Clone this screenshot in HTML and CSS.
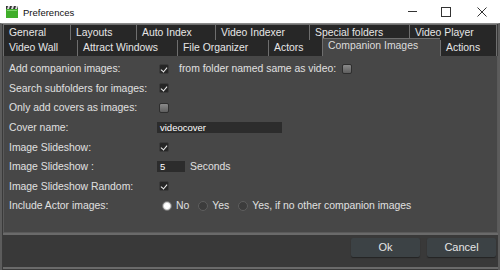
FILE: index.html
```html
<!DOCTYPE html>
<html lang="en">
<head>
  <meta charset="UTF-8">
  <title>Preferences</title>
  <link rel="stylesheet" href="styles.css">
</head>
<body>
  <div class="titlebar">
    <svg class="appicon" width="12" height="12" viewBox="0 0 12 12">
      <rect x="0" y="3" width="12" height="9" fill="#3fae2a"/>
      <rect x="0" y="0" width="12" height="3" fill="#333"/>
      <path d="M2 0 L4 0 L3 3 L1 3 Z M6 0 L8 0 L7 3 L5 3 Z M10 0 L12 0 L11 3 L9 3 Z" fill="#ddd"/>
      <rect x="1" y="4" width="10" height="1" fill="#7fd46a"/>
    </svg>
    <span class="wintitle">Preferences</span>
    <div class="winctl">
      <span class="ctl min"></span>
      <span class="ctl max"></span>
      <svg class="ctl close" width="10" height="10" viewBox="0 0 10 10"><path d="M0.5 0.5 L9.5 9.5 M9.5 0.5 L0.5 9.5" stroke="#333" stroke-width="1"/></svg>
    </div>
  </div>

  <div class="frame">
    <div class="tabrow row1">
      <div class="tab">General</div>
      <div class="tab">Layouts</div>
      <div class="tab">Auto Index</div>
      <div class="tab">Video Indexer</div>
      <div class="tab">Special folders</div>
      <div class="tab">Video Player</div>
    </div>
    <div class="tabrow row2">
      <div class="tab">Video Wall</div>
      <div class="tab">Attract Windows</div>
      <div class="tab">File Organizer</div>
      <div class="tab">Actors</div>
      <div class="tab active">Companion Images</div>
      <div class="tab">Actions</div>
    </div>

    <div class="panel">
      <div class="row">
        <span class="label">Add companion images:</span>
        <span class="check on"></span>
        <span class="text after">from folder named same as video:</span>
        <span class="check"></span>
      </div>
      <div class="row">
        <span class="label">Search subfolders for images:</span>
        <span class="check on"></span>
      </div>
      <div class="row">
        <span class="label">Only add covers as images:</span>
        <span class="check"></span>
      </div>
      <div class="row">
        <span class="label">Cover name:</span>
        <span class="field wide">videocover</span>
      </div>
      <div class="row">
        <span class="label">Image Slideshow:</span>
        <span class="check on"></span>
      </div>
      <div class="row">
        <span class="label">Image Slideshow :</span>
        <span class="field short">5</span>
        <span class="text unit">Seconds</span>
      </div>
      <div class="row">
        <span class="label">Image Slideshow Random:</span>
        <span class="check on"></span>
      </div>
      <div class="row">
        <span class="label">Include Actor images:</span>
        <span class="radio on"></span><span class="text opt">No</span>
        <span class="radio"></span><span class="text opt">Yes</span>
        <span class="radio"></span><span class="text opt">Yes, if no other companion images</span>
      </div>
    </div>

    <div class="buttonbar">
      <div class="btn">Ok</div>
      <div class="btn">Cancel</div>
    </div>
  </div>
</body>
</html>
```

FILE: styles.css
```css
body{
  margin: 0;
  width: 500px;
  height: 270px;
  background: #3a3a3a;
  font-family: "Liberation Sans", Arial, sans-serif;
  font-size: 10.4px;
  color: #e0e0e0;
  overflow: hidden;
}
.titlebar{
  height: 23px;
  background: #ffffff;
  display: flex;
  align-items: center;
  color: #111;
  font-size: 9.5px;
}
.appicon{
  margin-left: 6px;
  margin-right: 5px;
}
.wintitle{
  padding-top: 1px;
}
.winctl{
  margin-left: auto;
  display: flex;
  align-items: center;
}
.ctl{
  display: block;
}
.min{
  width: 9px;
  height: 1px;
  background: #333;
  margin-right: 24px;
}
.max{
  width: 8px;
  height: 8px;
  border: 1px solid #333;
  margin-right: 26px;
}
.close{
  margin-right: 13px;
}

.frame{
  height: 247px;
  border-top: 1px solid #8a8a8a;
  border-left: 2px solid #5c5c5c;
  border-right: 2px solid #5c5c5c;
  box-sizing: border-box;
  background: #3a3a3a;
  padding-left: 1px;
  display: flex;
  flex-direction: column;
}
.tabrow{
  display: grid;
  height: 16px;
  font-size: 10.4px;
}
.row1{
  grid-template-columns: 67px 66px 79px 94px 100px 88px;
}
.row2{
  grid-template-columns: 74px 100px 91px 54px 118px 57px;
}
.tab{
  background: #272727;
  border: 1px solid #6e6e6e;
  border-right: none;
  border-bottom: none;
  padding-left: 5px;
  line-height: 15px;
  white-space: nowrap;
  color: #e6e6e6;
}
.tab:last-child{
  border-right: 1px solid #6e6e6e;
}
.row1 .tab{
  border-bottom: 1px solid #6e6e6e;
}
.row2 .tab{
  border-top: none;
}
.tab.active{
  background: #474747;
  margin-top: -2px;
  border-top: 1px solid #6e6e6e;
  line-height: 14px;
  color: #dcdcdc;
}
.panel{
  height: 177px;
  background: #474747;
  border: 1px solid #5a5a5a;
  border-top: none;
  padding: 3px 0 0 5px;
  box-sizing: border-box;
}
.row{
  display: flex;
  align-items: center;
  height: 19.6px;
}
.label{
  width: 150px;
  flex: none;
}
.check{
  width: 10px;
  height: 10px;
  border-radius: 2px;
  box-sizing: border-box;
  border: 1px solid #2e2e2e;
  background: linear-gradient(#8a8a8a, #5e5e5e);
  position: relative;
  flex: none;
}
.check.on{
  background: #262626;
  border-color: #3a3a3a;
}
.check.on::after{
  content: "";
  position: absolute;
  left: 2px;
  top: 1px;
  width: 3px;
  height: 5px;
  border: solid #f0f0f0;
  border-width: 0 1.5px 1.5px 0;
  transform: rotate(40deg);
}
.after{
  margin-left: 10px;
  margin-right: 6px;
}
.field{
  background: #2c2c2c;
  color: #fff;
  font-size: 9.5px;
  height: 11px;
  line-height: 11px;
  padding-left: 3px;
  margin-left: -2px;
  box-sizing: border-box;
}
.wide{
  width: 125px;
}
.short{
  width: 28px;
}
.unit{
  margin-left: 5px;
}
.radio{
  width: 10px;
  height: 10px;
  box-sizing: border-box;
  border-radius: 50%;
  background: #3c3c3c;
  border: 1px solid #5e5e5e;
  flex: none;
}
.radio.on{
  margin-left: 3px;
  background: radial-gradient(circle, #ffffff 0 45%, #d8d8d8 60%, #9a9a9a 100%);
  border-color: #777;
}
.opt{
  margin-left: 4px;
  margin-right: 9px;
}

.buttonbar{
  flex: 1;
  border-top: 2px solid #6a6a6a;
  border-bottom: 2px solid #6a6a6a;
  background: #393939;
  display: flex;
  justify-content: flex-end;
  align-items: flex-start;
  padding: 3px 2px 0 0;
  gap: 7px;
  margin-bottom: 1px;
}
.btn{
  width: 69px;
  height: 19px;
  background: #3c4245;
  border-radius: 2px;
  box-shadow: 0 1px 1px #242424;
  text-align: center;
  line-height: 19px;
  font-size: 11px;
  color: #e6e6e6;
}
```
